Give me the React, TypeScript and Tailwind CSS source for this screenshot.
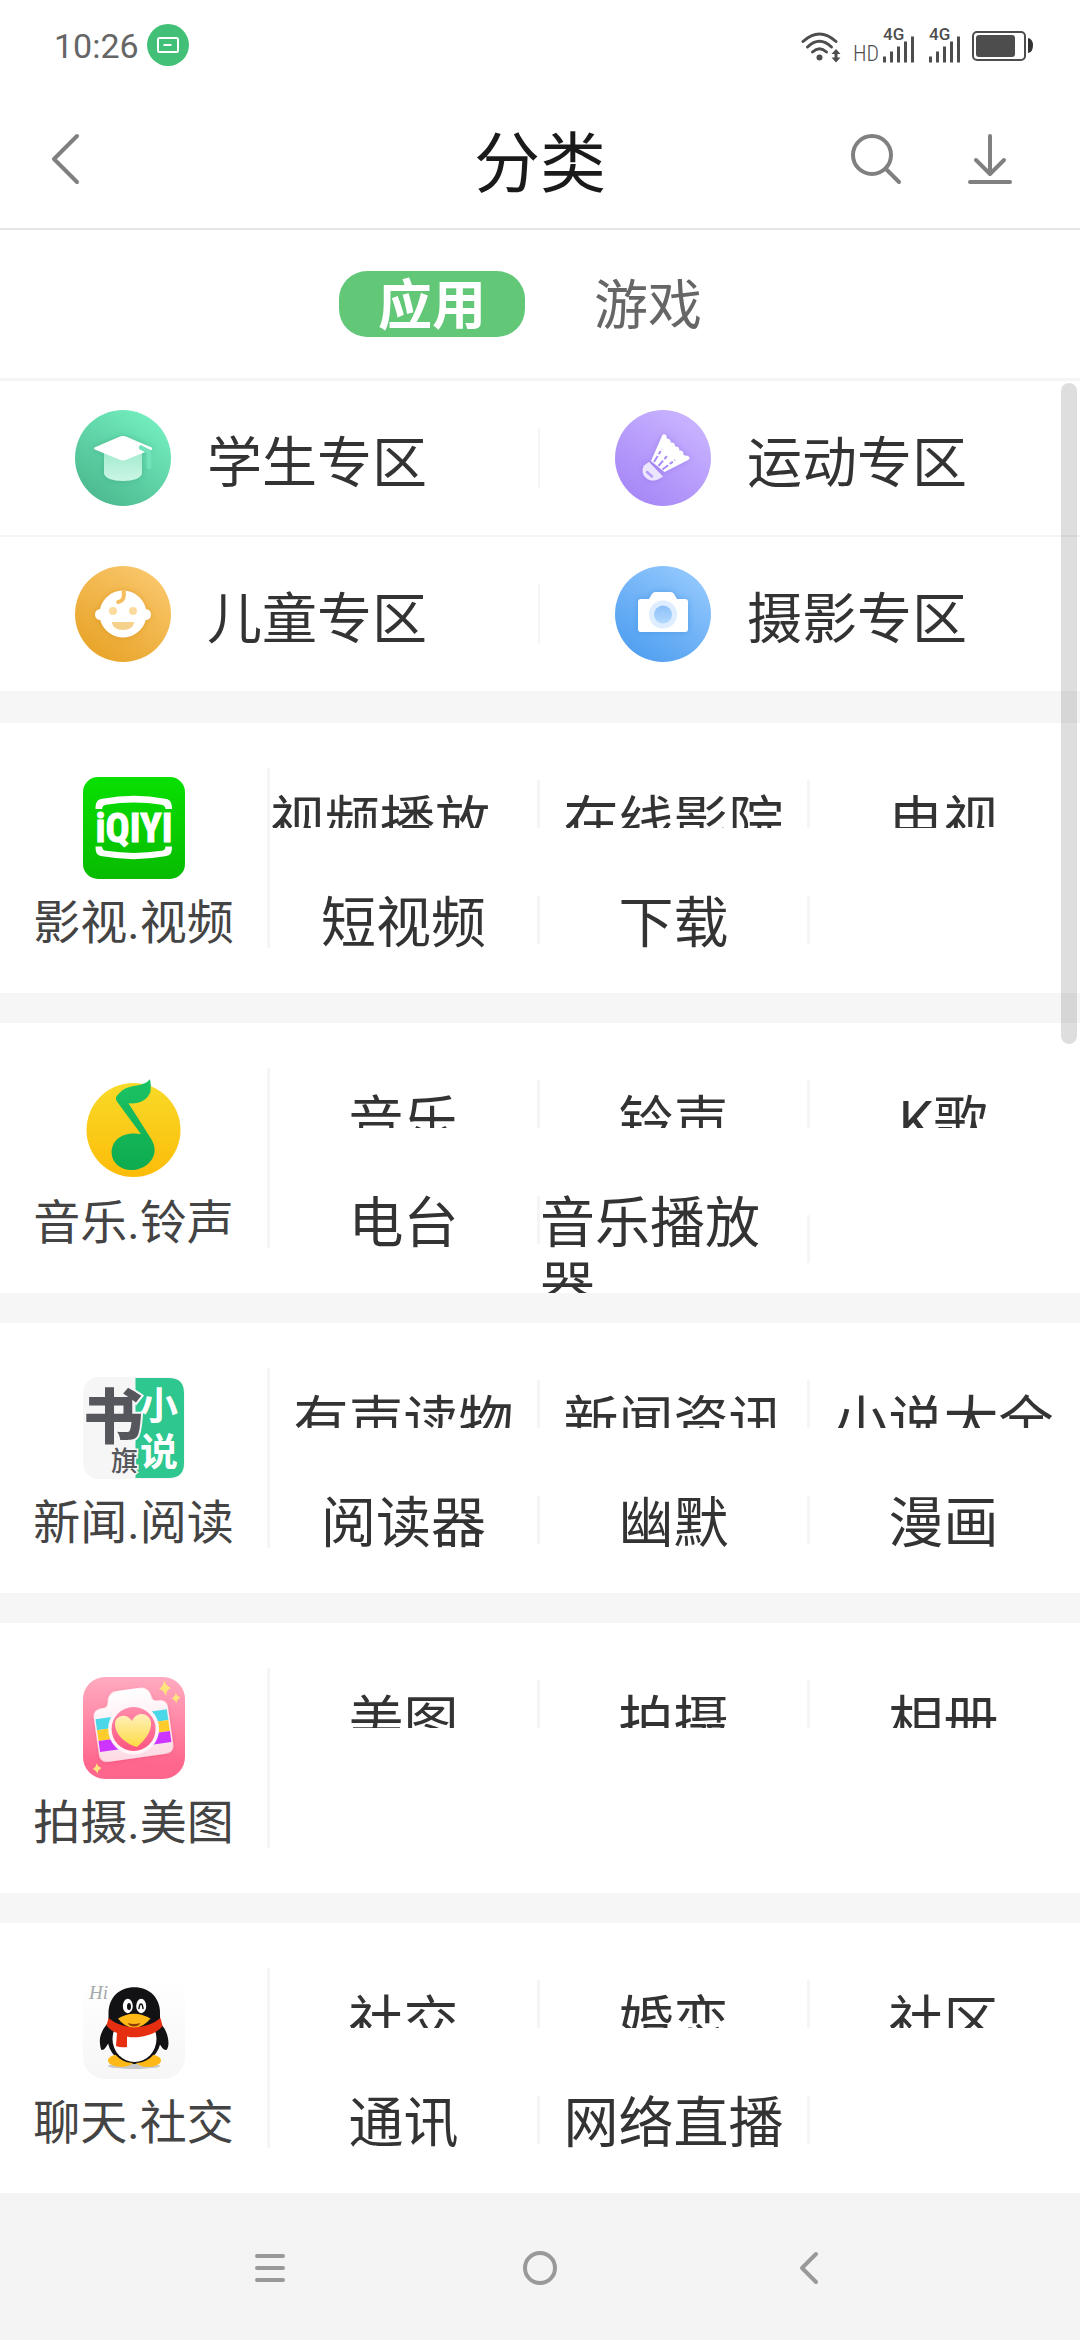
import { useState } from "react";
import type { ReactNode } from "react";

const TABS = ["应用", "游戏"];

function StudentIcon() {
  return (
    <svg viewBox="0 0 96 96" className="w-24 h-24 shrink-0" aria-hidden="true">
      <defs>
        <linearGradient id="student-bg" x1="0.8" y1="0.1" x2="0.2" y2="0.95">
          <stop offset="0" stopColor="#72ecbd" />
          <stop offset="1" stopColor="#4cb98f" />
        </linearGradient>
        <linearGradient id="student-cap" x1="0" y1="0" x2="0" y2="1">
          <stop offset="0" stopColor="#a2ebcf" />
          <stop offset="1" stopColor="#cbf6e5" />
        </linearGradient>
        <filter id="student-shadow" x="-30%" y="-30%" width="160%" height="160%">
          <feDropShadow dx="0" dy="0" stdDeviation="3" floodColor="#2f9c74" floodOpacity="0.5" />
        </filter>
      </defs>
      <circle cx="48" cy="48" r="48" fill="url(#student-bg)" />
      <g filter="url(#student-shadow)">
        <path d="M29 42h38v21c0 5-9 8-19 8s-19-3-19-8z" fill="url(#student-cap)" />
        <path d="M20 37.2 44 27q4-1.8 8 0l24 10.2q2 1.1 0 2.2L52 49.6q-4 1.8-8 0L20 39.4q-2-1.1 0-2.2z" fill="#fff" />
      </g>
      <path d="m66 37.5 8 4.3V57" fill="none" stroke="#72e2ba" strokeWidth="4.5" strokeLinecap="round" strokeLinejoin="round" />
      <path d="M68 35.3 77 39.4" fill="none" stroke="#fff" strokeWidth="1.5" />
    </svg>
  );
}

function SportIcon() {
  return (
    <svg viewBox="0 0 96 96" className="w-24 h-24 shrink-0" aria-hidden="true">
      <defs>
        <linearGradient id="sport-bg" x1="0.8" y1="0.1" x2="0.2" y2="0.95">
          <stop offset="0" stopColor="#c8b3ff" />
          <stop offset="1" stopColor="#a687f7" />
        </linearGradient>
        <filter id="sport-shadow" x="-30%" y="-30%" width="160%" height="160%">
          <feDropShadow dx="0" dy="0" stdDeviation="3" floodColor="#7a55dd" floodOpacity="0.4" />
        </filter>
      </defs>
      <circle cx="48" cy="48" r="48" fill="url(#sport-bg)" />
      <g filter="url(#sport-shadow)">
        <path
          d="M36 51 47 26c1-2.600 4.500-2.200 4.500 1 0 1 .3 1.500 1.300 1.700 2.200.3 3 1.600 2.900 3.700 3.300-.1 4.500 1.200 4.300 4 3.400-.2 4.500 1.400 4.200 4 3.400-.1 4.300 1.500 4.100 3.700.1.900.7 1.300 1.700 1.400 5 .1 6 3.200 2.500 4.800L49.500 62z"
          fill="#fff"
        />
        <path d="m34 52 14 14.500-5 3c-10 4-19-5-14-14z" fill="#ece5ff" />
      </g>
      <path d="m39 52 8-13M43.500 56l9-10.500M47.500 59.500 60 50" stroke="#a98bf7" strokeWidth="2" strokeDasharray="7 2 4 2" />
      <path d="m32 62 5 4.500" stroke="#b79df9" strokeWidth="2.500" strokeLinecap="round" />
    </svg>
  );
}

function KidsIcon() {
  return (
    <svg viewBox="0 0 96 96" className="w-24 h-24 shrink-0" aria-hidden="true">
      <defs>
        <linearGradient id="kids-bg" x1="0.8" y1="0.1" x2="0.2" y2="0.95">
          <stop offset="0" stopColor="#f9c568" />
          <stop offset="1" stopColor="#e8a429" />
        </linearGradient>
        <filter id="kids-shadow" x="-30%" y="-30%" width="160%" height="160%">
          <feDropShadow dx="0" dy="0" stdDeviation="3" floodColor="#cf8508" floodOpacity="0.5" />
        </filter>
      </defs>
      <circle cx="48" cy="48" r="48" fill="url(#kids-bg)" />
      <g fill="#fff" filter="url(#kids-shadow)">
        <circle cx="48" cy="48" r="23.5" />
        <circle cx="25.500" cy="48.500" r="5.500" />
        <circle cx="70.500" cy="48.500" r="5.500" />
      </g>
      <path d="M48.800 25v4.500q-.3 5.500-5.500 6.500" fill="none" stroke="#f5bd5c" strokeWidth="4" strokeLinecap="round" />
      <circle cx="38" cy="45" r="4" fill="#fbdc9e" />
      <circle cx="58" cy="45" r="4" fill="#fbdc9e" />
      <path d="M37 56h22c0 5-5 8-11 8s-11-3-11-8z" fill="#f6d18b" />
    </svg>
  );
}

function PhotoIcon() {
  return (
    <svg viewBox="0 0 96 96" className="w-24 h-24 shrink-0" aria-hidden="true">
      <defs>
        <linearGradient id="photo-bg" x1="0.8" y1="0.1" x2="0.2" y2="0.95">
          <stop offset="0" stopColor="#90c6fd" />
          <stop offset="1" stopColor="#509ff0" />
        </linearGradient>
        <linearGradient id="photo-lens" x1="0" y1="0" x2="0" y2="1">
          <stop offset="0" stopColor="#8cc0fa" />
          <stop offset="1" stopColor="#b2d8fd" />
        </linearGradient>
        <filter id="photo-shadow" x="-30%" y="-30%" width="160%" height="160%">
          <feDropShadow dx="0" dy="0" stdDeviation="3" floodColor="#2b7ed6" floodOpacity="0.45" />
        </filter>
      </defs>
      <circle cx="48" cy="48" r="48" fill="url(#photo-bg)" />
      <path
        d="M26 33h8l3-5q1.300-2 3.500-2h15q2.200 0 3.500 2l3 5h8q3 0 3 3v27q0 3-3 3H26q-3 0-3-3V36q0-3 3-3z"
        fill="#fff"
        filter="url(#photo-shadow)"
      />
      <circle cx="48" cy="48.500" r="14" fill="#deedff" />
      <circle cx="48" cy="48.500" r="9" fill="url(#photo-lens)" />
    </svg>
  );
}

function VideoAppIcon() {
  return (
    <svg viewBox="0 0 102 102" className="w-[102px] h-[102px]" aria-hidden="true">
      <defs>
        <linearGradient id="video-bg" x1="0" y1="0" x2="0" y2="1">
          <stop offset="0" stopColor="#08e000" />
          <stop offset="1" stopColor="#08bb00" />
        </linearGradient>
      </defs>
      <rect width="102" height="102" rx="15" fill="url(#video-bg)" />
      <path d="M12.500 32c0-8 2.500-9.500 7-10.300Q51 16 82 21.700c4.500.8 7 2.300 7 10.300h-6.500c-.5-3-1.500-4-4-4.300Q51 23.500 23 27.700c-2.500.3-3.500 1.300-4 4.300z" fill="#fff" />
      <path d="M12.500 69.500c0 8 2.500 9 7 9.800Q51 85 82 79.300c4.500-.8 7-1.800 7-9.800h-6.500c-.5 3-1.500 4-4 4.300Q51 78 23 73.800c-2.500-.3-3.500-1.300-4-4.300z" fill="#fff" />
      <text x="51" y="65" textAnchor="middle" fill="#fff" stroke="#fff" strokeWidth="1" fontSize="40" fontWeight="700" fontFamily="'Roboto Condensed', 'Liberation Sans', sans-serif">
        iQIYI
      </text>
    </svg>
  );
}

function MusicAppIcon() {
  return (
    <svg viewBox="0 0 102 102" className="w-[102px] h-[102px]" aria-hidden="true">
      <defs>
        <linearGradient id="music-bg" x1="0" y1="0" x2="0" y2="1">
          <stop offset="0" stopColor="#f8da28" />
          <stop offset="1" stopColor="#fcbc09" />
        </linearGradient>
        <linearGradient id="music-note" x1="0" y1="0" x2="0" y2="1">
          <stop offset="0" stopColor="#1bc364" />
          <stop offset="1" stopColor="#0eab4f" />
        </linearGradient>
      </defs>
      <circle cx="50.500" cy="53" r="47" fill="url(#music-bg)" />
      <path
        d="M66.800 2.300C68 5 67.900 10 67.500 14.700 64 23.500 57 27 45.500 26.300L68.500 62.500C71 67 71.800 70 71.600 74 71 85 60 93 48.600 93 37 93 28.600 85 28.600 75.700 28.600 64 38 54 57.900 57L35 26C32 22 32.500 20 35 17.500 41 10.500 47 9.500 55 8.200 61 7 64.500 5.500 66.800 2.300Z"
        fill="url(#music-note)"
      />
    </svg>
  );
}

function ReaderAppIcon() {
  return (
    <svg viewBox="0 0 102 102" className="w-[102px] h-[102px]" aria-hidden="true">
      <rect width="102" height="102" rx="16" fill="#f6f6f6" />
      <path d="M52.500 1H86q15 0 15 15v70q0 15-15 15H52.500z" fill="#2dc78f" />
      <g fontFamily="'Noto Sans CJK SC', sans-serif" fontWeight="900" fill="#56575c" stroke="#f6f6f6" paintOrder="stroke">
        <text x="0" y="62" fontSize="60" strokeWidth="4">书</text>
        <text x="28" y="94" fontSize="27" fontWeight="500" strokeWidth="3">旗</text>
      </g>
      <g fontFamily="'Noto Sans CJK SC', sans-serif" fontWeight="700">
        <text x="57" y="42" fontSize="38" fill="#fff">小</text>
        <text x="57" y="88" fontSize="38" fill="#fff">说</text>
      </g>
    </svg>
  );
}

function BeautyAppIcon() {
  return (
    <svg viewBox="0 0 102 102" className="w-[102px] h-[102px]" aria-hidden="true">
      <defs>
        <linearGradient id="beauty-bg" x1="0" y1="0" x2="0" y2="1">
          <stop offset="0" stopColor="#ffabc0" />
          <stop offset="0.85" stopColor="#ff668d" />
        </linearGradient>
        <linearGradient id="beauty-body" x1="0" y1="0" x2="0" y2="1">
          <stop offset="0" stopColor="#fff" />
          <stop offset="1" stopColor="#fddbe5" />
        </linearGradient>
        <linearGradient id="beauty-lens" x1="0" y1="0" x2="0" y2="1">
          <stop offset="0" stopColor="#ff8bab" />
          <stop offset="1" stopColor="#ff5580" />
        </linearGradient>
        <linearGradient id="beauty-heart" x1="0" y1="0" x2="0" y2="1">
          <stop offset="0" stopColor="#fff0bd" />
          <stop offset="1" stopColor="#fddb42" />
        </linearGradient>
        <filter id="beauty-shadow" x="-20%" y="-20%" width="140%" height="140%">
          <feDropShadow dx="0" dy="1" stdDeviation="1.500" floodColor="#e8476f" floodOpacity="0.5" />
        </filter>
      </defs>
      <rect width="102" height="102" rx="22" fill="url(#beauty-bg)" />
      <g transform="rotate(-8 51 54)">
        <path
          d="M23 27c4 0 5-1 6-5 1-7 5-10 11-10h21c7 0 11 3 12 10 .6 4 2 5 6 5 6 0 9 3 9 9v36c0 6-3 9-9 9H22c-6 0-9-3-9-9V36c0-6 3-9 10-9z"
          fill="url(#beauty-body)"
          filter="url(#beauty-shadow)"
        />
        <path d="M14.500 37h72v11h-72z" fill="#4ad8e8" />
        <path d="M14.500 48h72v11h-72z" fill="#fecd2c" />
        <path d="M14.500 59h72v11h-72z" fill="#cb35ff" />
      </g>
      <circle cx="50.600" cy="52" r="25.500" fill="#fff4f7" />
      <circle cx="50.600" cy="52" r="22" fill="url(#beauty-lens)" />
      <path d="M54 70C46 68 33 60 32 48c-1-10 12-13 17-4 4-10 17-9 19 1 1 10-7 19-14 25z" fill="url(#beauty-heart)" />
      <g fill="#ffe37c">
        <path d="M81 3q2 6 7 8-5 2-5 8-2-6-7-7 5-3 5-9z" />
        <path d="M92.500 15.500q1.500 4 5 5-4 2-4 6-1.500-4-5-5 4-2 4-6z" />
        <path d="M13.500 86q1.500 4 5 5-4 2-4 6-1.500-4-5-5 4-2 4-6z" />
      </g>
    </svg>
  );
}

function ChatAppIcon() {
  return (
    <svg viewBox="0 0 102 102" className="w-[102px] h-[102px]" aria-hidden="true">
      <defs>
        <linearGradient id="chat-bg" x1="0" y1="0" x2="0" y2="1">
          <stop offset="0" stopColor="#fff" />
          <stop offset="1" stopColor="#f6f6f6" />
        </linearGradient>
      </defs>
      <rect width="102" height="102" rx="22" fill="url(#chat-bg)" />
      <text x="6" y="22" fontSize="19" fontStyle="italic" fill="#a3a8ab" fontFamily="'Liberation Serif', serif">Hi</text>
      <ellipse cx="51" cy="89" rx="26" ry="3" fill="#c9c9c9" />
      <path d="M24 47c-5 6-8 13-7 20 .5 4 1 6 2 6 3 0 5-5 8-9l48 0c2 4 5 9 8 9 1 0 2-2 2.500-6 0-7-2-14-7.500-20z" fill="#121214" />
      <ellipse cx="51.200" cy="62" rx="26.500" ry="25" fill="#121214" />
      <ellipse cx="38" cy="83.500" rx="13" ry="6.500" fill="#ffb916" />
      <ellipse cx="65" cy="83.500" rx="13" ry="6.500" fill="#ffb916" />
      <path d="M28 68c3 12 12 18 23.500 18S72 80 75 68z" fill="#121214" />
      <ellipse cx="51.500" cy="62" rx="22" ry="23" fill="#fff" />
      <path d="M25.500 42V36C25.500 20 37 10.300 51.300 10.300S77 20 77 36v6c-10 14-42 14-51.500 0z" fill="#121214" />
      <path d="M25.500 41c14 12 38 12 52 0l2 8c-3 4-8 7-14 9-8 2.500-16 3-21.500 1.500v10.500q-6 1-11-1l1-13c-5-2-8-4.500-10.500-7.500z" fill="#e62e10" />
      <ellipse cx="44.800" cy="29" rx="5" ry="7.200" fill="#fff" />
      <ellipse cx="58.200" cy="29" rx="5" ry="7.200" fill="#fff" />
      <ellipse cx="46" cy="29.500" rx="2" ry="3.500" fill="#121214" />
      <path d="M56 31.500q.5-4.500 2-4.500t2 4.500" fill="none" stroke="#121214" strokeWidth="1.500" strokeLinecap="round" />
      <path d="M35 41.500q16-9.500 32.500 0-7 9-16.500 9t-16-9z" fill="#ffb916" />
      <path d="M44.500 46q6.500 2 13 0-2 3.500-6.500 3.500T44.500 46z" fill="#8e3d05" />
    </svg>
  );
}

const ZONES = [
  { name: "学生专区", icon: StudentIcon },
  { name: "运动专区", icon: SportIcon },
  { name: "儿童专区", icon: KidsIcon },
  { name: "摄影专区", icon: PhotoIcon },
];

const CATEGORIES = [
  { name: "影视.视频", icon: VideoAppIcon, items: ["视频播放器", "在线影院", "电视", "短视频", "下载"] },
  { name: "音乐.铃声", icon: MusicAppIcon, items: ["音乐", "铃声", "K歌", "电台", "音乐播放器"] },
  { name: "新闻.阅读", icon: ReaderAppIcon, items: ["有声读物", "新闻资讯", "小说大全", "阅读器", "幽默", "漫画"] },
  { name: "拍摄.美图", icon: BeautyAppIcon, items: ["美图", "拍摄", "相册"] },
  { name: "聊天.社交", icon: ChatAppIcon, items: ["社交", "婚恋", "社区", "通讯", "网络直播"] },
];

function Signal() {
  return (
    <svg viewBox="0 0 32 36" className="w-8 h-9 overflow-visible" aria-hidden="true">
      <text x="0" y="13" fontSize="17" fontWeight="500" fill="#4d4d4d" fontFamily="Roboto, sans-serif">4G</text>
      <path d="M1.500 35.500v-6M8.500 35.500v-11M15.500 35.500v-16M22.500 35.500v-21M29.500 35.500v-26" stroke="#4d4d4d" strokeWidth="3" />
    </svg>
  );
}

function StatusBar() {
  return (
    <div className="h-[90px] pl-[54px] pr-[47px] flex items-center justify-between">
      <div className="flex items-center gap-2">
        <span className="text-[34px] leading-[40px] text-[#666] pt-0.5">10:26</span>
        <svg viewBox="0 0 42 42" className="w-[42px] h-[42px]" aria-hidden="true">
          <circle cx="21" cy="21" r="21" fill="#42c077" />
          <rect x="11" y="14" width="20" height="14" rx="1.500" fill="none" stroke="#fff" strokeWidth="2" />
          <path d="M16.500 21h8" stroke="#fff" strokeWidth="2" />
        </svg>
      </div>
      <div className="flex items-end">
        <svg viewBox="0 0 40 36" className="w-10 h-9 mr-3" aria-hidden="true">
          <g fill="none" stroke="#4d4d4d" strokeWidth="3" strokeLinecap="round">
            <path d="M2 14.500Q18.500-.5 35 14.500" />
            <path d="M6.500 20Q18.500 8.500 30.500 20" />
            <path d="M11.500 25Q18.500 18.500 25.500 25" />
          </g>
          <circle cx="18.500" cy="30.500" r="3" fill="#4d4d4d" />
          <path d="m35 22 4.500 5H36.500v3.500h3L35 35.500l-4.500-5h3V27h-3z" fill="#4d4d4d" />
        </svg>
        <span className="font-['Roboto_Condensed',Roboto,sans-serif] text-[22px] leading-[18px] font-light text-[#4d4d4d] mr-1">HD</span>
        <Signal />
        <span className="w-[14px]" />
        <Signal />
        <svg viewBox="0 0 62 36" className="w-[62px] h-9 ml-[10px]" aria-hidden="true">
          <rect x="2" y="5" width="52" height="28" rx="4" fill="none" stroke="#4d4d4d" strokeWidth="2" />
          <rect x="5" y="8" width="39" height="22" rx="3" fill="#4d4d4d" />
          <path d="M57 11q5 1 5 7.500T57 26z" fill="#333" />
        </svg>
      </div>
    </div>
  );
}

function IconButton({ label, children }: { label: string; children: ReactNode }) {
  return (
    <button type="button" aria-label={label} className="text-[#808080]">
      <svg viewBox="0 0 54 54" className="w-[54px] h-[54px]" fill="none" stroke="currentColor" strokeWidth="4" strokeLinecap="round" strokeLinejoin="round">
        {children}
      </svg>
    </button>
  );
}

function Cell({ name, divider, clipped }: { name: string; divider: boolean; clipped: boolean }) {
  return (
    <a href="#" className={clipped ? "flex h-12 overflow-hidden" : "flex items-center"}>
      <div className={clipped ? "flex-1 flex justify-center pt-2.5" : "flex-1 flex justify-center pt-1.5 max-h-[108px] overflow-hidden"}>
        <span className="text-[55px] leading-[64px] text-[#333]">{name}</span>
      </div>
      <div className={divider ? "w-[3px] h-12 shrink-0 bg-[#f5f5f5]" : "w-[3px] h-12 shrink-0"} />
    </a>
  );
}

export default function App() {
  const [tab, setTab] = useState("应用");

  return (
    <div className="min-h-screen flex flex-col bg-white font-[Roboto,'Noto_Sans_CJK_SC',sans-serif]">
      <StatusBar />

      <header className="h-[140px] px-10 grid grid-cols-3 items-center border-b-2 border-[#e6e6e6]">
        <div className="flex">
          <IconButton label="返回">
            <path d="M37 4 14 27l23 23" />
          </IconButton>
        </div>
        <h1 className="text-[66px] leading-[80px] text-center text-[#1a1a1a] pt-3">分类</h1>
        <div className="flex justify-end gap-15 pr-6">
          <IconButton label="搜索">
            <circle cx="24" cy="23" r="19" />
            <path d="m38 37 13 13" />
          </IconButton>
          <IconButton label="下载管理">
            <path d="M28 4v38M14 28l14 14 14-14M8 50h40" />
          </IconButton>
        </div>
      </header>

      <nav className="h-[151px] flex items-center justify-center gap-[30px] border-b-3 border-[#f5f5f5]">
        {TABS.map((name) => (
          <button
            key={name}
            type="button"
            onClick={() => setTab(name)}
            className={
              tab === name
                ? "w-[186px] h-[66px] pt-1.5 rounded-[28px] bg-[#62c878] text-white font-bold text-[54px] leading-[60px]"
                : "w-[186px] h-[66px] pt-1.5 rounded-[28px] text-[#666] text-[54px] leading-[60px]"
            }
          >
            {name}
          </button>
        ))}
      </nav>

      <main className="relative flex-1 bg-[#f6f6f6]">
        <div className="grid grid-cols-2 bg-white">
          {ZONES.map((zone, index) => {
            const Icon = zone.icon;
            return (
              <a key={zone.name} href="#" className="h-[156px] flex items-center border-b-2 border-[#f5f5f5]">
                <div className="flex-1 flex items-center gap-9 pl-[75px]">
                  <Icon />
                  <span className="text-[55px] leading-[64px] text-[#333] pt-2.5">{zone.name}</span>
                </div>
                {index % 2 === 0 && <div className="w-0.5 h-[60px] bg-[#f5f5f5]" />}
              </a>
            );
          })}
        </div>

        <div className="flex flex-col gap-[30px] pt-[30px]">
          {CATEGORIES.map((category) => {
            const Icon = category.icon;
            return (
              <section key={category.name} className="h-[270px] flex bg-white overflow-hidden">
                <div className="w-1/4 flex items-center">
                  <div className="flex-1 self-start flex flex-col items-center gap-3 pt-[54px]">
                    <Icon />
                    <h2 className="text-[47px] leading-[64px] text-[#444] whitespace-nowrap">{category.name}</h2>
                  </div>
                  <div className="w-[3px] h-[180px] bg-[#f5f5f5]" />
                </div>
                <div className="flex-1 pt-[57px]">
                  <div className="grid grid-cols-3">
                    {category.items.slice(0, 3).map((item, index) => (
                      <Cell key={item} name={item} divider={index < 2} clipped />
                    ))}
                  </div>
                  <div className="grid grid-cols-3 items-start pt-[57px]">
                    {category.items.slice(3).map((item, index) => (
                      <Cell key={item} name={item} divider={index < 2} clipped={false} />
                    ))}
                  </div>
                </div>
              </section>
            );
          })}
        </div>

        <div className="absolute top-0.5 right-[3px] w-4 h-[661px] rounded-full bg-black/13" />
      </main>

      <footer className="h-[147px] flex items-center justify-center gap-[216px] bg-[#f4f4f4]">
        <IconButton label="菜单">
          <path d="M14 16h26M14 28h26M14 40h26" className="stroke-[#999]" />
        </IconButton>
        <IconButton label="主页">
          <circle cx="27" cy="28" r="15" className="stroke-[#999]" />
        </IconButton>
        <IconButton label="后退">
          <path d="M33 14 19 28l14 14" className="stroke-[#999]" />
        </IconButton>
      </footer>
    </div>
  );
}
